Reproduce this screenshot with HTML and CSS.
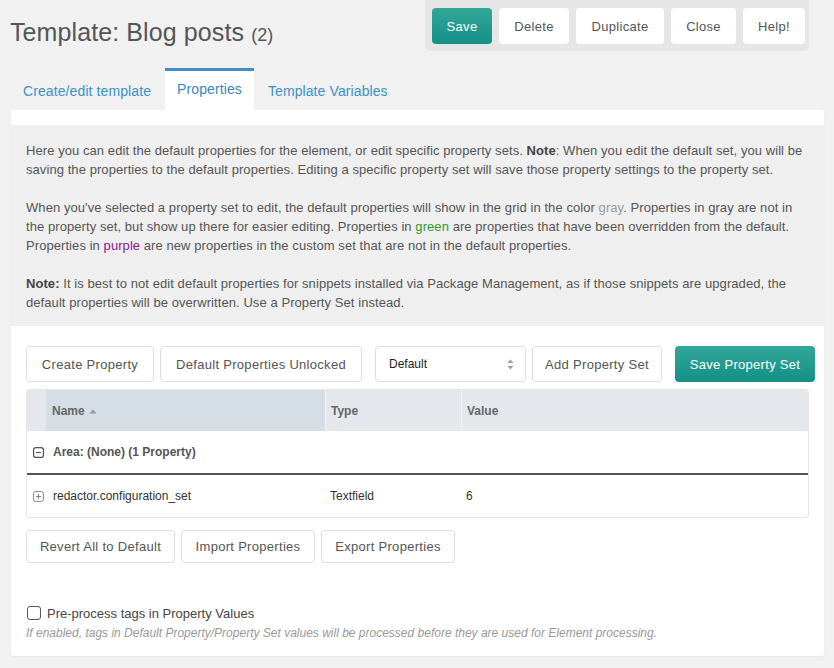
FILE: index.html
```html
<!DOCTYPE html>
<html>
<head>
<meta charset="utf-8">
<link rel="stylesheet" href="styles.css">
</head>
<body>
<div class="header">
  <h1 class="title">Template: Blog posts <span class="count">(2)</span></h1>
  <div class="actions">
    <button class="btn btn-primary">Save</button>
    <button class="btn">Delete</button>
    <button class="btn">Duplicate</button>
    <button class="btn">Close</button>
    <button class="btn">Help!</button>
  </div>
</div>
<div class="tabs">
  <div class="tab">Create/edit template</div>
  <div class="tab active">Properties</div>
  <div class="tab">Template Variables</div>
</div>
<div class="panel">
  <div class="info">
    <p>Here you can edit the default properties for the element, or edit specific property sets. <b>Note</b>: When you edit the default set, you will be<br>saving the properties to the default properties. Editing a specific property set will save those property settings to the property set.</p>
    <p>When you've selected a property set to edit, the default properties will show in the grid in the color <span class="c-gray">gray</span>. Properties in gray are not in<br>the property set, but show up there for easier editing. Properties in <span class="c-green">green</span> are properties that have been overridden from the default.<br>Properties in <span class="c-purple">purple</span> are new properties in the custom set that are not in the default properties.</p>
    <p><b>Note:</b> It is best to not edit default properties for snippets installed via Package Management, as if those snippets are upgraded, the<br>default properties will be overwritten. Use a Property Set instead.</p>
  </div>
  <div class="content">
    <div class="toolbar">
      <button class="tbtn w-create">Create Property</button>
      <button class="tbtn w-unlock gap-sm">Default Properties Unlocked</button>
      <div class="select gap-lg">
        <span>Default</span>
        <svg class="updown" width="7" height="11" viewBox="0 0 7 11"><path d="M3.5 0.5 L6.5 4 L0.5 4 Z M3.5 10.5 L6.5 7 L0.5 7 Z" fill="#a0a0a0"/></svg>
      </div>
      <button class="tbtn w-add gap-sm">Add Property Set</button>
      <button class="tbtn tbtn-primary gap-lg">Save Property Set</button>
    </div>
    <div class="grid">
      <div class="grid-head">
        <div class="col col-x"></div>
        <div class="col col-name sorted">Name <svg class="sort" width="8" height="5" viewBox="0 0 8 5"><path d="M4 0.5 L7.5 4.5 L0.5 4.5 Z" fill="#999"/></svg></div>
        <div class="col col-type">Type</div>
        <div class="col col-value">Value</div>
      </div>
      <div class="group-row">
        <svg class="toggle" width="11" height="11" viewBox="0 0 11 11"><rect x="0.6" y="0.6" width="9.8" height="9.8" rx="2.2" fill="none" stroke="#555" stroke-width="1.2"/><path d="M3 5.5 H8" stroke="#555" stroke-width="1.2"/></svg>
        <span>Area: (None) (1 Property)</span>
      </div>
      <div class="data-row">
        <div class="cell col-x"><svg class="toggle" width="11" height="11" viewBox="0 0 11 11"><rect x="0.6" y="0.6" width="9.8" height="9.8" rx="2" fill="none" stroke="#777" stroke-width="0.9"/><path d="M3 5.5 H8 M5.5 3 V8" stroke="#777" stroke-width="0.9"/></svg></div>
        <div class="cell col-name">redactor.configuration_set</div>
        <div class="cell col-type">Textfield</div>
        <div class="cell col-value">6</div>
      </div>
    </div>
    <div class="bottom-bar">
      <button class="bbtn w-revert">Revert All to Default</button>
      <button class="bbtn w-import">Import Properties</button>
      <button class="bbtn w-import">Export Properties</button>
    </div>
    <label class="check">
      <span class="box"></span>
      <span>Pre-process tags in Property Values</span>
    </label>
    <div class="help">If enabled, tags in Default Property/Property Set values will be processed before they are used for Element processing.</div>
  </div>
</div>
</body>
</html>
```
FILE: styles.css
```css
* { box-sizing: border-box; }
html, body { margin: 0; padding: 0; }
body {
  background: #f1f1f1;
  font-family: "Liberation Sans", Arial, sans-serif;
  color: #555;
  width: 834px;
  height: 668px;
  overflow: hidden;
}
button { font-family: inherit; cursor: pointer; white-space: nowrap; }

.header {
  display: flex;
  justify-content: space-between;
  align-items: flex-start;
  height: 51px;
}
.title {
  margin: 17px 0 0 10px;
  font-size: 25px;
  font-weight: normal;
  color: #555;
  line-height: 30px;
  letter-spacing: 0.1px;
}
.title .count { font-size: 18px; }

.actions {
  display: flex;
  gap: 7px;
  background: #e6e6e6;
  padding: 8px 4px 7px 7px;
  border-radius: 0 0 5px 5px;
  margin-right: 25px;
}
.btn {
  height: 36px;
  padding: 0;
  border: 0;
  border-radius: 4px;
  background: #fff;
  color: #555;
  font-size: 13px;
  letter-spacing: 0.3px;
}
.actions .btn:nth-child(2) { width: 70px; }
.actions .btn:nth-child(3) { width: 88px; }
.actions .btn:nth-child(4) { width: 65px; }
.actions .btn:nth-child(5) { width: 62px; }
.btn-primary {
  width: 60px;
  background: linear-gradient(#33a798, #139089);
  color: #fff;
}

.tabs {
  display: flex;
  margin: 17px 0 0 11px;
  height: 42px;
}
.tab {
  padding: 0 12px;
  margin-right: 2px;
  font-size: 14px;
  letter-spacing: 0.1px;
  color: #3b92c9;
  line-height: 40px;
  border-top: 3px solid transparent;
}
.tab.active {
  background: #fff;
  border-top-color: #3f8fc6;
  color: #3a87bd;
  line-height: 37px;
}

.panel {
  margin: 0 10px 0 11px;
  background: #fff;
  padding-top: 15px;
  height: 546px;
  border-radius: 0 3px 3px 3px;
  box-shadow: 0 1px 2px rgba(0,0,0,0.04);
}
.info {
  background: #efefef;
  padding: 16px 0 14px 15px;
  font-size: 13px;
  line-height: 19px;
  letter-spacing: 0.07px;
  color: #555;
  white-space: nowrap;
}
.info p { margin: 0 0 19px 0; }
.info p:last-child { margin-bottom: 0; }
.info b { color: #444; }
.c-gray { color: #999; }
.c-green { color: #2f9a2f; }
.c-purple { color: #8b1b8b; }

.content { padding: 20px 16px 0 15px; }

.toolbar {
  display: flex;
  height: 36px;
}
.toolbar > * { flex: none; }
.gap-sm { margin-left: 6px; }
.gap-lg { margin-left: 13px; }
.tbtn, .bbtn {
  background: #fff;
  border: 1px solid #dedede;
  border-radius: 4px;
  color: #555;
  font-size: 13px;
  letter-spacing: 0.3px;
  padding: 0;
}
.tbtn { height: 36px; }
.w-create { width: 128px; }
.w-unlock { width: 202px; }
.w-add { width: 130px; }
.tbtn-primary {
  width: 140px;
  border: 0;
  background: linear-gradient(#33a798, #139089);
  color: #fff;
}
.select {
  width: 151px;
  height: 36px;
  border: 1px solid #dedede;
  border-radius: 4px;
  display: flex;
  align-items: center;
  justify-content: space-between;
  padding: 0 11px 0 13px;
  font-size: 12px;
  color: #222;
}

.grid {
  margin-top: 7px;
  border: 1px solid #e6e6e6;
  border-radius: 3px;
  width: 783px;
  overflow: hidden;
}
.grid-head {
  display: flex;
  height: 41px;
  background: #e4e8ec;
  font-size: 12px;
  font-weight: bold;
  color: #666;
}
.col-x { width: 19px; flex: none; }
.col-name { width: 279px; flex: none; }
.col-type { width: 136px; flex: none; }
.col-value { flex: 1; }
.grid-head .col {
  display: flex;
  align-items: center;
  padding-left: 6px;
}
.grid-head .col-x { padding-left: 0; }
.grid-head .col-type, .grid-head .col-value { border-left: 1px solid #f4f6f8; padding-left: 5px; }
.grid-head .sorted { background: #d5dde5; }
.sort { margin-left: 4px; margin-top: 1px; }

.group-row {
  height: 44px;
  display: flex;
  align-items: center;
  padding-left: 6px;
  border-bottom: 2px solid #555;
  font-size: 12px;
  font-weight: bold;
  color: #555;
}
.group-row .toggle { margin-right: 9px; }
.data-row {
  display: flex;
  height: 42px;
  align-items: center;
  font-size: 12px;
  color: #333;
}
.data-row .cell { padding-left: 6px; }
.data-row .col-x { display: flex; align-items: center; }
.data-row .col-name { padding-left: 7px; }
.data-row .col-type, .data-row .col-value { padding-left: 5px; }

.bottom-bar {
  display: flex;
  gap: 6px;
  margin-top: 12px;
}
.bbtn { height: 33px; }
.w-revert { width: 149px; }
.w-import { width: 134px; }

.check {
  display: flex;
  align-items: center;
  margin-top: 42px;
  font-size: 13px;
  color: #444;
  height: 16px;
}
.box {
  width: 14px;
  height: 14px;
  border: 1.5px solid #555;
  border-radius: 3px;
  margin: 0 6px 0 1px;
  background: #fff;
}
.help {
  margin-top: 4px;
  font-size: 12px;
  font-style: italic;
  color: #999;
  line-height: 16px;
}
```
